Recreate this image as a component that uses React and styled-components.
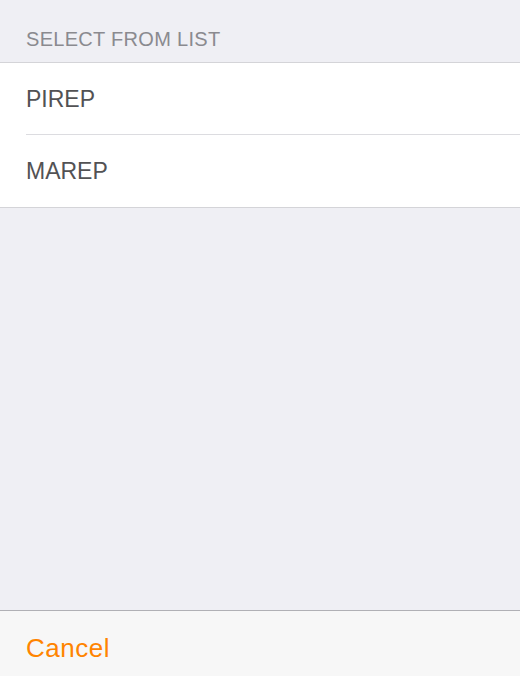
import styled, { createGlobalStyle } from "styled-components";

const GlobalStyle = createGlobalStyle`
    html, body {
        margin: 0;
        padding: 0;
        background: #efeff4;
        font-family: "Liberation Sans", Arial, sans-serif;
    }
`;

const Sheet = styled.div`
    width: 520px;
    height: 676px;
    display: flex;
    flex-direction: column;
    background: #efeff4;
    overflow: hidden;
`;

const SectionHeader = styled.div`
    height: 62px;
    box-sizing: border-box;
    padding: 27px 26px 0;
    font-size: 20px;
    line-height: 24px;
    letter-spacing: 0.3px;
    color: #8a8a8f;
    text-transform: uppercase;
`;

const List = styled.ul`
    margin: 0;
    padding: 0 0 0 26px;
    list-style: none;
    background: #fff;
    border-top: 1px solid #d4d4d8;
    border-bottom: 1px solid #d4d4d8;
`;

const Row = styled.li`
    height: 72px;
    box-sizing: border-box;
    padding-top: 2px;
    font-size: 23px;
    line-height: 68px;
    color: #525254;
    border-bottom: ${(p) => (p.last ? "none" : "1px solid #dcdce0")};
`;

const Spacer = styled.div`
    flex: 1;
`;

const Toolbar = styled.div`
    height: 66px;
    box-sizing: border-box;
    padding: 9px 26px 0;
    background: #f7f7f7;
    border-top: 1px solid #b0b0b5;
    display: flex;
    align-items: center;
`;

const CancelButton = styled.button`
    border: none;
    background: none;
    padding: 0;
    font-family: inherit;
    font-size: 26px;
    letter-spacing: 0.5px;
    color: #ff8400;
    cursor: pointer;
`;

const items = ["PIREP", "MAREP"];

const App = () => {
    return (
        <Sheet>
            <GlobalStyle />
            <SectionHeader>Select from list</SectionHeader>
            <List>
                {items.map((item, i) => (
                    <Row key={item} last={i === items.length - 1}>
                        {item}
                    </Row>
                ))}
            </List>
            <Spacer />
            <Toolbar>
                <CancelButton>Cancel</CancelButton>
            </Toolbar>
        </Sheet>
    );
};

export default App;
